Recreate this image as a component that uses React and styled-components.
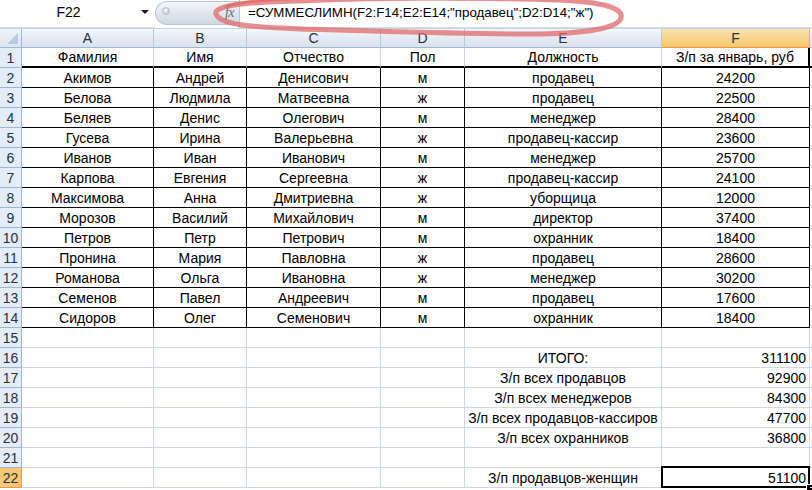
import React from "react";
import styled, { createGlobalStyle } from "styled-components";

const GlobalStyle = createGlobalStyle`
  html, body {
    margin: 0;
    padding: 0;
    background: #ffffff;
    overflow: hidden;
  }

  body {
    font-family: "Liberation Sans", Arial, sans-serif;
    font-size: 14px;
    color: #000;
  }
`;

const Screen = styled.div`
  position: relative;
  width: 812px;
  height: 490px;
  overflow: hidden;
  background: #fff;
`;

const FormulaBar = styled.div`
  display: flex;
  height: 28px;
  border-bottom: 1px solid #c5d2e3;
  background: #fff;
`;

const NameBox = styled.div`
  position: relative;
  flex: 0 0 155px;
  display: flex;
  align-items: center;
  justify-content: center;
  padding: 0 18px 3px 0;
  box-sizing: border-box;
  border-bottom: 1px solid #d5dce6;
`;

const DropArrow = styled.span`
  position: absolute;
  right: 6px;
  top: 10px;
  width: 0;
  height: 0;
  border-left: 4px solid transparent;
  border-right: 4px solid transparent;
  border-top: 4px solid #1c1c1c;
`;

const Splitter = styled.div`
  flex: 0 0 84px;
  height: 24px;
  margin-top: 1px;
  display: flex;
  align-items: center;
  justify-content: space-between;
  padding: 0 5px 0 6px;
  box-sizing: border-box;
  border-radius: 12px 0 0 12px;
  border: 1px solid #b9c6d6;
  border-right: none;
  background: linear-gradient(#f4f6f9, #dfe5ed 55%, #cfd8e3);
`;

const Grip = styled.span`
  width: 6px;
  height: 6px;
  border-radius: 50%;
  background: radial-gradient(circle at 40% 40%, #ffffff, #aab6c5);
  border: 1px solid #b3bfcd;
  margin-top: -4px;
`;

const FxLabel = styled.span`
  font-family: "Liberation Serif", "Times New Roman", serif;
  font-style: italic;
  font-size: 14px;
  color: #6b6b6b;
  letter-spacing: -0.5px;
`;

const FormulaInput = styled.div`
  flex: 1;
  min-width: 0;
  display: flex;
  align-items: center;
  padding: 0 0 3px 8px;
  border-left: 1px solid #b9c6d6;
  border-bottom: 1px solid #d5dce6;
  font-size: 13.3px;
  white-space: nowrap;
  overflow: hidden;
`;

const Sheet = styled.div`
  display: grid;
  grid-template-columns: 22px 132px 93px 134px 84px 197px 148px 40px;
  grid-template-rows: 19px;
  grid-auto-rows: 20px;
`;

const Corner = styled.div`
  position: relative;
  box-sizing: border-box;
  background: linear-gradient(#eef3f9, #dce5f0);
  border-right: 1px solid #9eb6ce;
  border-bottom: 1px solid #9eb6ce;

  &::after {
    content: "";
    position: absolute;
    right: 3px;
    bottom: 3px;
    width: 0;
    height: 0;
    border-left: 11px solid transparent;
    border-bottom: 11px solid #b9cbe0;
  }
`;

const ColHeader = styled.div`
  box-sizing: border-box;
  display: flex;
  align-items: center;
  justify-content: center;
  color: #27313f;
  background: ${(p) =>
    p.$active
      ? "linear-gradient(#fbe2b2, #f8d58f 50%, #f5c66c)"
      : "linear-gradient(#f5f8fc, #e4ebf4 50%, #d9e2ee)"};
  border-right: 1px solid ${(p) => (p.$active ? "#f0b561" : "#b9c9da")};
  border-bottom: 1px solid ${(p) => (p.$active ? "#f29536" : "#9eb6ce")};
`;

const RowHeader = styled.div`
  box-sizing: border-box;
  display: flex;
  align-items: center;
  justify-content: center;
  color: #27313f;
  background: ${(p) => (p.$active ? "#f8c776" : "#e4ecf7")};
  border-right: 1px solid ${(p) => (p.$active ? "#f29536" : "#9eb6ce")};
  border-bottom: 1px solid ${(p) => (p.$active ? "#f29536" : "#9eb6ce")};
`;

const Cell = styled.div`
  position: relative;
  box-sizing: border-box;
  display: flex;
  align-items: center;
  justify-content: ${(p) =>
    p.$align === "right" ? "flex-end" : p.$align === "left" ? "flex-start" : "center"};
  padding: 0 3px;
  white-space: nowrap;
  border-right: ${(p) =>
    p.$thickRight ? "2px solid #000" : `1px solid ${p.$boxed ? "#000" : "#d0d7e5"}`};
  border-bottom: ${(p) =>
    p.$thickBottom ? "2px solid #000" : `1px solid ${p.$boxed ? "#000" : "#d0d7e5"}`};

  ${(p) =>
    p.$active &&
    `
    &::before {
      content: "";
      position: absolute;
      left: -1px;
      top: -2px;
      right: -1px;
      bottom: -1px;
      border: 2px solid #000;
    }
    &::after {
      content: "";
      position: absolute;
      right: -4px;
      bottom: -4px;
      width: 5px;
      height: 5px;
      background: #000;
      border: 1px solid #fff;
    }
  `}
`;

const Ellipse = styled.svg`
  position: absolute;
  left: 0;
  top: 0;
  pointer-events: none;
`;

const columns = ["A", "B", "C", "D", "E", "F", ""];

const header = ["Фамилия", "Имя", "Отчество", "Пол", "Должность", "З/п за январь, руб"];

const people = [
  ["Акимов", "Андрей", "Денисович", "м", "продавец", "24200"],
  ["Белова", "Людмила", "Матвеевна", "ж", "продавец", "22500"],
  ["Беляев", "Денис", "Олегович", "м", "менеджер", "28400"],
  ["Гусева", "Ирина", "Валерьевна", "ж", "продавец-кассир", "23600"],
  ["Иванов", "Иван", "Иванович", "м", "менеджер", "25700"],
  ["Карпова", "Евгения", "Сергеевна", "ж", "продавец-кассир", "24100"],
  ["Максимова", "Анна", "Дмитриевна", "ж", "уборщица", "12000"],
  ["Морозов", "Василий", "Михайлович", "м", "директор", "37400"],
  ["Петров", "Петр", "Петрович", "м", "охранник", "18400"],
  ["Пронина", "Мария", "Павловна", "ж", "продавец", "28600"],
  ["Романова", "Ольга", "Ивановна", "ж", "менеджер", "30200"],
  ["Семенов", "Павел", "Андреевич", "м", "продавец", "17600"],
  ["Сидоров", "Олег", "Семенович", "м", "охранник", "18400"],
];

const totals = {
  16: ["ИТОГО:", "311100"],
  17: ["З/п всех продавцов", "92900"],
  18: ["З/п всех менеджеров", "84300"],
  19: ["З/п всех продавцов-кассиров", "47700"],
  20: ["З/п всех охранников", "36800"],
  22: ["З/п продавцов-женщин", "51100"],
};

const App = () => {
  const rows = [];

  // row 1: table header with a thick line under it
  rows.push(<RowHeader key="h1">1</RowHeader>);
  header.forEach((text, i) =>
    rows.push(
      <Cell key={`1-${i}`} $thickBottom $thickRight={i === 5}>
        {text}
      </Cell>
    )
  );
  rows.push(<Cell key="1-g" $thickBottom />);

  // rows 2..14: bordered data
  people.forEach((person, r) => {
    const n = r + 2;
    rows.push(<RowHeader key={`h${n}`}>{n}</RowHeader>);
    person.forEach((text, i) =>
      rows.push(
        <Cell key={`${n}-${i}`} $boxed>
          {text}
        </Cell>
      )
    );
    rows.push(<Cell key={`${n}-g`} />);
  });

  // rows 15..22: totals under the table
  for (let n = 15; n <= 22; n++) {
    const t = totals[n];
    rows.push(
      <RowHeader key={`h${n}`} $active={n === 22}>
        {n}
      </RowHeader>
    );
    for (let i = 0; i < 4; i++) rows.push(<Cell key={`${n}-${i}`} />);
    rows.push(<Cell key={`${n}-4`}>{t ? t[0] : ""}</Cell>);
    rows.push(
      <Cell key={`${n}-5`} $align="right" $active={n === 22}>
        {t ? t[1] : ""}
      </Cell>
    );
    rows.push(<Cell key={`${n}-g`} />);
  }

  return (
    <>
      <GlobalStyle />
      <Screen>
        <FormulaBar>
          <NameBox>
            F22
            <DropArrow />
          </NameBox>
          <Splitter>
            <Grip />
            <FxLabel>fx</FxLabel>
          </Splitter>
          <FormulaInput>=СУММЕСЛИМН(F2:F14;E2:E14;"продавец";D2:D14;"ж")</FormulaInput>
        </FormulaBar>
        <Sheet>
          <Corner />
          {columns.map((c, i) => (
            <ColHeader key={i} $active={c === "F"}>
              {c}
            </ColHeader>
          ))}
          {rows}
        </Sheet>
        <Ellipse width="812" height="50" viewBox="0 0 812 50">
          <path
            d="M 300 1 C 250 2, 213 5, 216 14 C 220 24, 245 27, 300 29 C 380 31, 460 34, 530 34 C 585 34, 618 28, 621 18 C 624 8, 602 2, 560 0 C 480 -3, 350 -2, 300 1"
            fill="none"
            stroke="rgba(224, 104, 104, 0.75)"
            strokeWidth="5"
            strokeLinecap="round"
          />
          <path
            d="M 226 7 C 236 2, 255 0, 290 -1"
            fill="none"
            stroke="rgba(224, 104, 104, 0.75)"
            strokeWidth="3"
            strokeLinecap="round"
          />
        </Ellipse>
      </Screen>
    </>
  );
};

export default App;
